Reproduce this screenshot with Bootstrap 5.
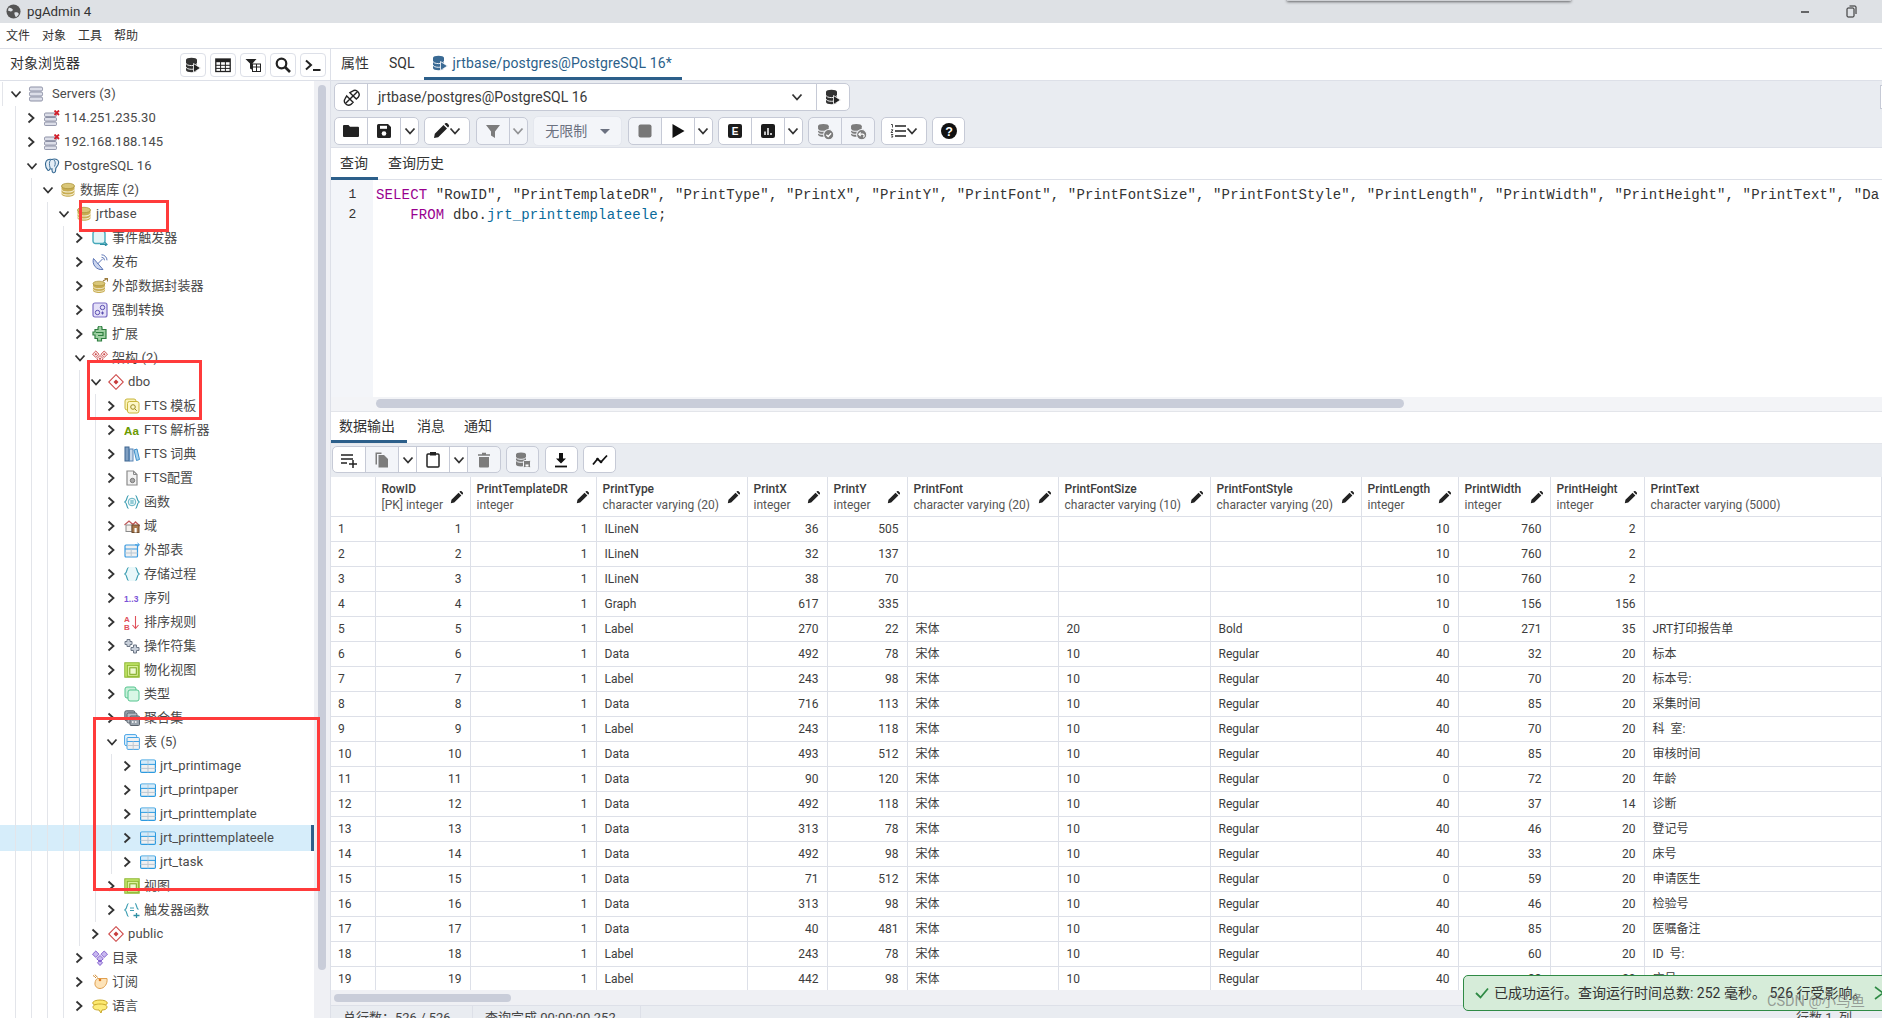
<!doctype html>
<html lang="zh">
<head>
<meta charset="utf-8">
<title>pgAdmin 4</title>
<link rel="stylesheet" href="https://cdn.jsdelivr.net/npm/bootstrap@5.3.0/dist/css/bootstrap.min.css">
<style>
html,body{height:100%;overflow:hidden}
body{font-family:Roboto,"Noto Sans CJK SC",sans-serif;font-size:13px;color:#3c3c3c;background:#fff}
.app{position:relative;height:1018px;width:1882px;overflow:hidden}
.titlebar{height:23px;background:#dee1e5;position:relative;font-size:13.300px;color:#333}
.titlebar .tshadow{position:absolute;left:1287px;top:-3px;width:284px;height:4px;background:#cfd1d5;box-shadow:0 1px 3px rgba(0,0,0,.55)}
.tlogo{width:15px;height:15px;margin:0 6px 0 6px}
.winbtns{margin-left:auto;gap:35px;padding-right:25px}
.menubar{height:26px;border-bottom:1px solid #dde0e8;font-size:12px;gap:12px;padding-left:6px;color:#333}
.mainarea{height:969px}
.sidepane{width:331px;flex:none;border-right:1px solid #dde0e8}
.sidehead{height:32px;border-bottom:1px solid #dde0e8;padding:0 4px 0 10px}
.sidehead .ttl{font-size:14px;color:#333;margin-right:auto;margin-top:-3px}
.sidehead .stools{gap:4px}
.sbtn{width:26px;height:24px;padding:0;border:1px solid #dde0e8;border-radius:4px;background:#fff;display:inline-flex;align-items:center;justify-content:center}
.treewrap{height:937px;overflow:hidden}
.treelist{width:314px;flex:none;overflow:hidden;padding-top:1px}
.trow{height:24px;display:flex;align-items:center;white-space:nowrap;color:#4a4a4a;letter-spacing:.08px}
.trow.root{background:linear-gradient(#e3e5ea,#e3e5ea) 2px 0/1px 100% no-repeat}
.trow.sel{height:26px;margin:-1px 0;background:#d6edfa;border-right:3px solid #2c5f8a}
.gd{flex:none;align-self:stretch;background:repeating-linear-gradient(90deg,transparent 0 15px,#e3e5ea 15px 16px)}
.d1{width:16px}.d2{width:32px}.d3{width:48px}.d4{width:64px}.d5{width:80px}.d6{width:96px}.d7{width:112px}
.cv{flex:none;width:28px;padding-left:10px;display:flex;align-items:center}
.ic{width:16px;height:16px;flex:none;margin-right:4px}
.vtrack{width:16px;background:#eff0f4;padding:4px 0 0 4px}
.vthumb{width:8px;height:885px;background:#c9cdd9;border-radius:4px}
.contentpane{width:1551px;flex:none;overflow:hidden}
.toptabs{height:31px}
.ptab{height:31px;padding:0 10px;color:#333;font-size:14px;display:flex;align-items:center;border-bottom:3px solid transparent;margin:0;line-height:1;white-space:nowrap}
.toptabs .ptab{padding-bottom:1px}
.ptab.on{border-bottom-color:#2c5f8a}
.toptabs .ptab.on{color:#2c5f8a;width:258px;padding-left:8px;letter-spacing:.13px}
.barzone{height:68px;background:#e9ecf1;border-top:1px solid #dde0e8;border-bottom:1px solid #dde0e8;padding:2px 0 0 3px;position:relative}
.sliver{position:absolute;right:0;top:4px;width:2px;height:24px;background:#fff;border:1px solid #c6cad6;border-right:0}
.bar1{height:28px;margin-bottom:6px}
.bar2{gap:5.400px;height:28px}
.tbtn{--bs-btn-padding-x:0;--bs-btn-padding-y:0;--bs-btn-border-radius:5px;width:34px;height:28px;background:#fff;border:1px solid #c6cad6;display:inline-flex;align-items:center;justify-content:center}
.btn-group>.tbtn{flex:none}
.tbtn:hover{background:#fff;border-color:#c6cad6}
.tbtn.nar{width:19px}
.tbtn.off{background:#f3f5f9}
.tbtn.wid{width:46px}
.tbtn.solo{width:33px}
.btn-group>.tbtn.consel{width:450px;justify-content:space-between;padding:0 13px 0 10px;font-size:14px;color:#3a3a3a}
.limitbtn{width:89px;height:30px;margin-top:-1px;background:#f3f5f9;border:1px solid #e4e7ee;border-radius:5px;color:#6b7180;font-size:14px;display:inline-flex;align-items:center;justify-content:center;gap:13px;padding:0}
.caret2{width:0;height:0;border-left:5px solid transparent;border-right:5px solid transparent;border-top:5px solid #6b7180}
.qtabs{height:32px;border-bottom:1px solid #dde0e8}
.qtabs .ptab{height:32px;padding:0 0 0 9px;width:47px;margin-right:0}
.qtabs .ptab.later{width:auto;padding-left:10px}
.codezone{height:217px;overflow:hidden}
.gutter{width:42px;flex:none;background:#f3f5f9;padding-top:5px;font-family:"Liberation Mono",monospace;font-size:13px;line-height:20px;text-align:center;color:#333;padding-left:1px}
.codebox{padding:5px 0 0 3px;font-family:"Liberation Mono",monospace;font-size:14px;letter-spacing:.14px;line-height:20px;white-space:pre;overflow:hidden;color:#333;margin:0;flex:1}
.kw{color:#990090}.tn{color:#0a6a9a}
.hbar1{height:15px;background:#f3f4f7;padding:2px 0 0 45px;border-bottom:1px solid #e3e5ea}
.hthumb1{width:1028px;height:9px;background:#c9cdd9;border-radius:5px}
.rtabs{height:31px}
.rtabs .ptab{font-size:14px;height:31px}
.rtabs .ptab.on{width:76px;padding:0 0 0 8px}
.rtabs .ptab.later{padding:0 9px 0 10px}
.rbar{height:34px;background:#e9ecf1;padding:2px 0 0 1px;gap:5.400px;border-top:1px solid #e3e5ea}
.rbar .tbtn{height:27px}
.grbox{height:513px;overflow:hidden}
.dgrid{table-layout:fixed;width:1551px;margin:0;border-collapse:collapse;font-size:12px;color:#3c3c3c;--bs-table-border-color:#dde0e8}
.c0{width:44px}.c1{width:95px}.c2{width:126px}.c3{width:151px}.c4{width:80px}.c5{width:80px}.c6{width:151px}.c7{width:152px}.c8{width:151px}.c9{width:97px}.c10{width:92px}.c11{width:94px}
.dgrid th,.dgrid td{border:1px solid #dde0e8;border-top:0;padding:0 8px;height:25px;line-height:14px;white-space:nowrap;overflow:hidden;box-shadow:none;vertical-align:middle;color:#3c3c3c}
.dgrid thead th{height:39px;font-weight:500;padding:2px 6px 0;position:relative;line-height:16px;vertical-align:middle}
.dgrid thead th small{display:block;font-size:12px;font-weight:400;color:#555}
.dgrid thead th:first-child{border-left:0}
.dgrid td:first-child{border-left:0;padding-left:7px;box-shadow:2px 0 2px -1px rgba(0,0,0,.09)}
.dgrid td:nth-child(2),.dgrid td:nth-child(3),.dgrid td:nth-child(5),.dgrid td:nth-child(6),.dgrid td:nth-child(10),.dgrid td:nth-child(11),.dgrid td:nth-child(12){text-align:right}
.pen{position:absolute;right:7px;top:14px;width:13px;height:13px}
.hbar2{height:16px;background:#eff0f4;padding:4px 0 0 3px;border-bottom:1px solid #dde0e8}
.hthumb2{width:177px;height:8px;background:#c9cdd9;border-radius:4px}
.statusbar{height:24px;background:#e9ecf1;font-size:13px;color:#444}
.statusbar .seg{padding:0 12px;border-right:1px solid #dde0e8;height:100%;display:flex;align-items:center}
.seg1{width:142px}.seg2{width:168px}
.statusbar .endseg{margin-left:auto;padding-right:30px;white-space:nowrap}
.anno{position:absolute;border:3px solid #ff3b3b;pointer-events:none}
.an1{left:79px;top:200px;width:90px;height:32px}
.an2{left:87px;top:360px;width:115px;height:60px}
.an3{left:93px;top:717px;width:227px;height:174px}
.okmsg{position:absolute;left:1463px;top:975px;width:430px;height:36px;background:#d6ecd9;border:1px solid #2f8a45;border-radius:5px;font-size:14px;color:#333;padding-left:10px;white-space:nowrap;gap:4px}
.okclose{position:absolute;left:409px;top:10px}
.wmark{position:absolute;left:1767px;top:991px;font-size:14.500px;color:rgba(110,110,110,.65);white-space:nowrap}
</style>
</head>
<body>
<svg width="0" height="0" class="position-absolute">
<defs>
<symbol id="chR" viewBox="0 0 10 12"><path d="M2.500 1.500 7.500 6l-5 4.500" fill="none" stroke="#333" stroke-width="1.800"/></symbol>
<symbol id="chD" viewBox="0 0 12 10"><path d="M1.500 2.500 6 7.500l4.500-5" fill="none" stroke="#333" stroke-width="1.800"/></symbol>
<symbol id="srv" viewBox="0 0 16 16"><g fill="#dcdee8" stroke="#8d91a6"><rect x="1.500" y="1" width="13" height="4" rx="1.300"/><rect x="1.500" y="6" width="13" height="4" rx="1.300"/><rect x="1.500" y="11" width="13" height="4" rx="1.300"/></g></symbol>
<symbol id="srvx" viewBox="0 0 16 16"><g fill="#dcdee8" stroke="#8d91a6"><rect x=".5" y="3" width="12" height="3.600" rx="1.200"/><rect x=".5" y="7.500" width="12" height="3.600" rx="1.200"/><rect x=".5" y="12" width="12" height="3.600" rx="1.200"/></g><path d="M10.500.5l4.500 4.500M15 .5 10.500 5" stroke="#d21f2b" stroke-width="1.800"/></symbol>
<symbol id="pg" viewBox="0 0 16 16"><path d="M8 1.500C5 .8 2 2 1.600 5c-.3 2.500.8 6 2.200 7.200 1 .8 1.700-.4 2.400-1.600.6.400 1.200.4 1.800.3-.1 1.200-.1 3 1 3.600 1.300.6 2.500-.4 2.600-2 .1-1 .1-2 .4-2.700 1.400-1.400 2.900-3.800 2.600-6C14.300 1.500 10.500.3 8 1.500z" fill="#e3edf6" stroke="#336791" stroke-width="1.100"/><path d="M6.500 2c-1.500 2-1.300 5-.3 8M10 2c1.500 1.500 1.600 4 .5 6.500" fill="none" stroke="#336791" stroke-width=".9"/></symbol>
<symbol id="db" viewBox="0 0 16 16"><path d="M1.500 4v8c0 1.500 2.900 2.800 6.500 2.800s6.500-1.300 6.500-2.800V4z" fill="#c8ad52"/><ellipse cx="8" cy="4" rx="6.500" ry="2.700" fill="#d9c678" stroke="#a88f35" stroke-width=".7"/><path d="M1.500 7.200c0 1.500 2.900 2.800 6.500 2.800s6.500-1.300 6.500-2.800M1.500 10.200c0 1.500 2.900 2.800 6.500 2.800s6.500-1.300 6.500-2.800" fill="none" stroke="#f4edd0" stroke-width="1.100"/></symbol>
<symbol id="evt" viewBox="0 0 16 16"><rect x="1" y="1" width="12" height="12.500" rx="2.500" fill="#e4f5f7" stroke="#46a9ba" stroke-width="1.400"/><path d="M8 14.500h6.500M13 12.500l2 2-2 1.500" fill="none" stroke="#2f8fa3" stroke-width="1.200"/></symbol>
<symbol id="pub" viewBox="0 0 16 16"><path d="M1.500 4.500a8.500 8.500 0 0 0 9.500 11z" fill="#cdd7ef" stroke="#5a74b5"/><path d="M5.500 10 10.500 5M9.500.8a5.500 5.500 0 0 1 5.500 5.500M9.500 3.300a3 3 0 0 1 3 3" fill="none" stroke="#5a74b5"/></symbol>
<symbol id="fdw" viewBox="0 0 16 16"><path d="M1 5.500v7c0 1.300 2.700 2.500 6 2.500s6-1.200 6-2.500v-7z" fill="#c8ad52"/><ellipse cx="7" cy="5.500" rx="6" ry="2.300" fill="#d9c678" stroke="#a88f35" stroke-width=".7"/><path d="M1 8.300c0 1.300 2.700 2.400 6 2.400s6-1.100 6-2.400M1 11c0 1.300 2.700 2.400 6 2.400s6-1.100 6-2.400" fill="none" stroke="#f4edd0"/><path d="M11 3 15 .8M12.500.5H15.500V3.500" fill="none" stroke="#9a7a3c" stroke-width="1.100"/></symbol>
<symbol id="cast" viewBox="0 0 16 16"><rect x="1" y="1" width="14" height="14" rx="2" fill="#e4e0f8" stroke="#7b6cc4" stroke-width="1.200"/><circle cx="5.500" cy="10.500" r="2.200" fill="none" stroke="#5b4fb0"/><circle cx="10.500" cy="5.500" r="2.200" fill="none" stroke="#5b4fb0"/><path d="M9 11h3M10.500 9.500v3" stroke="#5b4fb0"/></symbol>
<symbol id="ext" viewBox="0 0 16 16"><path d="M3 3.500h3V2a2 2 0 0 1 4 0v1.500h4v9H9.500V15h-4v-2.500H3V9H1V6h2z" fill="#9fd0a3" stroke="#2f7f40" stroke-width="1.200"/><path d="M4 6.500h7v3H6" fill="none" stroke="#2f7f40" stroke-width="1.200"/></symbol>
<symbol id="schs" viewBox="0 0 16 16"><g fill="#fbe9e9" stroke="#c94a4a" stroke-width=".9"><path d="M3.800 1 7 4.200 3.800 7.500.5 4.200zM12.200 1l3.300 3.200-3.300 3.300L9 4.200zM8 5.500l3.300 3.200L8 12 4.700 8.700z"/></g><g fill="#c94a4a"><circle cx="3.800" cy="4.200" r="1"/><circle cx="12.200" cy="4.200" r="1"/><circle cx="8" cy="8.700" r="1"/></g></symbol>
<symbol id="sch" viewBox="0 0 16 16"><path d="M8 .7 15.300 8 8 15.300.7 8z" fill="#fff" stroke="#cf4b4b" stroke-width="1.100"/><path d="M8 5.500 10.500 8 8 10.500 5.500 8z" fill="#c83c3c"/></symbol>
<symbol id="ftpl" viewBox="0 0 16 16"><rect x="1" y="1" width="11" height="11" rx="2" fill="#fbf3b8" stroke="#c8b63c"/><rect x="3.500" y="3.500" width="11.500" height="11.500" rx="2" fill="#fdf7c8" stroke="#c8b63c"/><circle cx="9" cy="9" r="2.300" fill="none" stroke="#9a8a20"/><path d="m10.800 10.800 2 2" stroke="#9a8a20"/></symbol>
<symbol id="aa" viewBox="0 0 16 16"><text x="0" y="12.500" font-family="Liberation Sans" font-size="11.500" font-weight="700" fill="#6a9a00">Aa</text></symbol>
<symbol id="dict" viewBox="0 0 16 16"><rect x="1" y="1" width="4" height="14" fill="#7f9fc2" stroke="#3c6490"/><rect x="5.500" y="3" width="3.500" height="12" fill="#c7d8ea" stroke="#5b86b4"/><path d="m10 4 3-1 2.500 10.500-3 1z" fill="#a8d4ef" stroke="#3e8fc9"/></symbol>
<symbol id="cfgd" viewBox="0 0 16 16"><path d="M3 1h6.500L13 4.500V15H3z" fill="#f2f2f2" stroke="#8a8a8a" stroke-width="1.200"/><path d="M9.500 1v3.500H13" fill="none" stroke="#8a8a8a"/><circle cx="8.500" cy="10.500" r="2.200" fill="#aaa" stroke="#777"/></symbol>
<symbol id="fn" viewBox="0 0 16 16"><path d="M4.500 1.500C2.500 1.800 3.500 7 .8 8c2.700 1 1.700 6.200 3.700 6.500M11.500 1.500c2 .3 1 5.500 3.700 6.500-2.700 1-1.700 6.200-3.700 6.500" fill="none" stroke="#3f9fb3" stroke-width="1.200"/><circle cx="8" cy="8" r="3.800" fill="#e7f6f8" stroke="#3f9fb3" stroke-width=".8"/><path d="M6.300 7h3.400M6.300 9h3.400" stroke="#3f9fb3"/></symbol>
<symbol id="dom" viewBox="0 0 16 16"><path d="M.5 7 5 3l4 3.500L11.500 4 16 8" fill="none" stroke="#c05a5a" stroke-width="1.300"/><rect x="2" y="7" width="6" height="6.500" fill="#f4f0ec" stroke="#8a8a8a"/><rect x="8" y="7" width="7" height="7.500" fill="#a9794e" stroke="#6f4d2e"/><rect x="10.500" y="10" width="2.200" height="4.500" fill="#fff"/></symbol>
<symbol id="ftb" viewBox="0 0 16 16"><rect x="1" y="3" width="12.500" height="12" rx="1" fill="#f0f0f0" stroke="#3a9ae0" stroke-width="1.200"/><path d="M1 7h12.500" stroke="#3a9ae0"/><path d="M7.200 7v8M1 11h12.500" stroke="#b9c7d3"/><path d="M11 2.800h4M13.500 1 15.500 2.800 13.500 4.600" fill="none" stroke="#3a9ae0"/></symbol>
<symbol id="prc" viewBox="0 0 16 16"><path d="M5 1C2.500 2 2 5.500 2 8s.5 6 3 7h6c2.500-1 3-4.500 3-7s-.5-6-3-7z" fill="#eaf8fa"/><path d="M4.500 1.500C2.500 1.800 3.500 7 .8 8c2.700 1 1.700 6.200 3.700 6.500M11.500 1.500c2 .3 1 5.500 3.700 6.500-2.700 1-1.700 6.200-3.700 6.500" fill="none" stroke="#3f9fb3" stroke-width="1.200"/></symbol>
<symbol id="seq" viewBox="0 0 16 16"><text x="0" y="11.500" font-family="Liberation Sans" font-size="8.500" font-weight="700" fill="#7b52d6">1..3</text></symbol>
<symbol id="coll" viewBox="0 0 16 16"><text x="0" y="7.500" font-family="Liberation Sans" font-size="8" font-weight="700" fill="#e0505a">A</text><text x="0" y="15.500" font-family="Liberation Sans" font-size="8" font-weight="700" fill="#e0505a">B</text><path d="M11.500 2v12M8.500 11l3 3.500 3-3.500" fill="none" stroke="#e0505a" stroke-width="1.100"/></symbol>
<symbol id="ops" viewBox="0 0 16 16"><g fill="#c9d0da" stroke="#6d7786"><path d="M1 3.500h2v-2h3v2h2v3H6v2H3v-2H1z"/><path d="M7 9.500h2.500v-2.500h3v2.500H15v3h-2.500V15h-3v-2.500H7z"/></g></symbol>
<symbol id="mv" viewBox="0 0 16 16"><rect x=".8" y=".8" width="14.400" height="14.400" fill="#c6e86e" stroke="#8ab52c"/><rect x="3.300" y="3.300" width="11" height="11" fill="#dcf29e" stroke="#8ab52c"/><rect x="5.800" y="5.800" width="6.500" height="6.500" fill="#eef9cf" stroke="#7aa520"/></symbol>
<symbol id="typ" viewBox="0 0 16 16"><rect x="1" y="1" width="11" height="11" rx="2" fill="#c7f0d9" stroke="#55c48f"/><rect x="4" y="4" width="11" height="11" rx="2" fill="#d9f7e6" stroke="#55c48f"/></symbol>
<symbol id="agg" viewBox="0 0 16 16"><rect x=".8" y=".8" width="10" height="10" rx="1.500" fill="#9aa3ad" stroke="#59626c"/><rect x="3" y="3" width="10" height="10" rx="1.500" fill="#b5bcc4" stroke="#59626c"/><rect x="6" y="6" width="9.500" height="9.500" rx="1" fill="#98a2ac" stroke="#59626c"/><path d="M8 9h1.500M11 9h1.500M8 12h1.500M11 12h1.500" stroke="#fff" stroke-width="1.400"/></symbol>
<symbol id="tbs" viewBox="0 0 16 16"><rect x=".6" y=".6" width="12" height="11" rx="1.500" fill="#e7f3fc" stroke="#45a3e6"/><rect x="3" y="3.500" width="12.400" height="11.900" rx="1" fill="#f1f1f1" stroke="#45a3e6"/><path d="M3 7.500h12.400" stroke="#45a3e6"/><path d="M9.200 7.500v8M3 11.500h12.400" stroke="#c2c8cf"/></symbol>
<symbol id="tb" viewBox="0 0 16 16"><rect x=".6" y="2" width="14.800" height="12.400" rx="1.200" fill="#f0f0f0" stroke="#2d9be0" stroke-width="1.200"/><rect x="1.200" y="2.600" width="13.600" height="3.600" fill="#d4ebfa"/><path d="M.6 6.400h14.800" stroke="#2d9be0"/><path d="M8 6.400v8M.6 10.400h14.800M8 2v4" stroke="#b9c7d3"/></symbol>
<symbol id="tfn" viewBox="0 0 16 16"><path d="M4.500 1.500C2.500 1.800 3.500 7 .8 8c2.700 1 1.700 6.200 3.700 6.500M11 1.500c2 .3 1 5 3.500 6" fill="none" stroke="#3f9fb3" stroke-width="1.200"/><path d="M6 6h4M6 8.500h4" stroke="#3f9fb3"/><path d="M9.500 13.500h6M12.500 11v5" stroke="#2f8fa3" stroke-width="1.300"/></symbol>
<symbol id="cat" viewBox="0 0 16 16"><g fill="#c8b8f0" stroke="#7a55c8" stroke-width=".9"><path d="M3.800 1 7 4.200 3.800 7.500.5 4.200zM12.200 1l3.300 3.200-3.300 3.300L9 4.200zM8 5.500l3.300 3.200L8 12 4.700 8.700zM8 10l2.500 2.800L8 15.500l-2.500-2.700z"/></g></symbol>
<symbol id="subs" viewBox="0 0 16 16"><path d="M5.500 4.500h9.500c.8 5-2.500 10-7 10-3 0-5.500-2.500-5-5.500.2-2 1-3.800 2.500-4.500z" fill="#fde3b8" stroke="#e0a050"/><path d="M1 1.500c1 .5 2 1.300 3 2.500M2.800.8C4 1.500 5 2.500 5.500 3.500" fill="none" stroke="#d08a30"/><circle cx="8" cy="6" r="1.300" fill="#e07a20"/></symbol>
<symbol id="lang" viewBox="0 0 16 16"><ellipse cx="8" cy="5" rx="7.300" ry="3" fill="#fde96e" stroke="#c9a82a"/><path d="M1 9c0-2 3-3 7-3s7 1 7 3-2 3-5 3l-1 3-2-3C3 12 1 11 1 9z" fill="#fdec7a" stroke="#c9a82a"/></symbol>

<symbol id="dbplay" viewBox="0 0 16 16"><path d="M1 3v10c0 1.300 2.500 2.300 5.500 2.300S12 14.300 12 13V3z" fill="#333"/><ellipse cx="6.500" cy="3" rx="5.500" ry="2.300" fill="#333"/><path d="M1 6.300c0 1.300 2.500 2.300 5.500 2.300S12 7.600 12 6.300M1 10c0 1.300 2.500 2.300 5.500 2.300S12 11.300 12 10" fill="none" stroke="#fff" stroke-width=".9"/><path d="M8.500 6.500 15.500 11 8.500 15.500z" fill="#222" stroke="#fff" stroke-width=".8"/></symbol>
<symbol id="gridi" viewBox="0 0 16 16"><rect x=".8" y="2" width="14.400" height="12.500" fill="#fff" stroke="#222" stroke-width="1.300"/><rect x="1" y="2" width="14" height="3.200" fill="#222"/><path d="M.8 8.300h14.400M.8 11.400h14.400M5.600 5v9.500M10.400 5v9.500" stroke="#222"/></symbol>
<symbol id="ftbl" viewBox="0 0 16 16"><path d="M.5 2h11L7.500 6.500V13L5 11.500V6.500z" fill="#222"/><rect x="7.500" y="7" width="8" height="7.500" fill="#fff" stroke="#222"/><path d="M7.500 10h8M11.500 7v7.500" stroke="#222"/></symbol>
<symbol id="srch" viewBox="0 0 16 16"><circle cx="6.500" cy="6.500" r="4.800" fill="none" stroke="#222" stroke-width="2.200"/><path d="m10 10 5 5" stroke="#222" stroke-width="2.600"/></symbol>
<symbol id="term" viewBox="0 0 16 16"><path d="m1 3.500 5 4.500-5 4.500" fill="none" stroke="#222" stroke-width="2"/><path d="M8 13h7.500" stroke="#222" stroke-width="2"/></symbol>
<symbol id="globe" viewBox="0 0 16 16"><circle cx="8" cy="8" r="7.500" fill="#555"/><path d="M3 4c2-.5 3 .5 4 1.500S6 8 5 8 3 7 2 7zM9 9c2-.5 4 0 4.500 1s-1.500 3.500-3 4c-.5-1.500-2-3-1.500-5z" fill="#dfe2e6"/></symbol>
<symbol id="conn" viewBox="0 0 16 16"><path d="m2.500 13.500 11-11" stroke="#222" stroke-width="1.300"/><path d="M3.500 6.500 9.500 12.500 7.500 14.500c-1.500 1-3.500 1-5 -.5s-1.500-3.500-.5-5zM6.500 3.500 12.500 9.500 14.500 7.500c1-1.500 1-3.500-.5-5s-3.500-1.500-5-.5z" fill="none" stroke="#222" stroke-width="1.300"/></symbol>
<symbol id="fold" viewBox="0 0 16 16"><path d="M0 3a1 1 0 0 1 1-1h4.500L7 3.800h8a1 1 0 0 1 1 1V13a1 1 0 0 1-1 1H1a1 1 0 0 1-1-1z" fill="#222"/></symbol>
<symbol id="save" viewBox="0 0 16 16"><path d="M2.500 1H12l3 3v9.500a1.500 1.500 0 0 1-1.500 1.500h-11A1.500 1.500 0 0 1 1 13.500v-11A1.500 1.500 0 0 1 2.500 1z" fill="#222"/><rect x="4" y="2.800" width="7" height="3" fill="#fff"/><circle cx="8" cy="10.500" r="2.300" fill="#fff"/></symbol>
<symbol id="pencil" viewBox="0 0 16 16"><path d="M1 15l.8-4.200L10.500 2l3.500 3.500-8.800 8.700zM11.500 1l3.500 3.500 .5-.5a1.800 1.800 0 0 0-.1-2.600l-.8-.8a1.800 1.800 0 0 0-2.600 0z" fill="#222"/></symbol>
<symbol id="funnel" viewBox="0 0 16 16"><path d="M1 2h14l-5 6.500V15l-4-2.500v-4z" fill="#7c7c7c"/></symbol>
<symbol id="stopi" viewBox="0 0 16 16"><rect x="1.500" y="1.500" width="13" height="13" rx="2" fill="#777"/></symbol>
<symbol id="playi" viewBox="0 0 16 16"><path d="M2.500 1 14.500 8l-12 7z" fill="#111"/></symbol>
<symbol id="ebox" viewBox="0 0 16 16"><rect x="1" y="1" width="14" height="14" rx="2" fill="#1c1c1c"/><text x="8" y="12" text-anchor="middle" font-family="Liberation Sans" font-size="10" font-weight="700" fill="#fff">E</text></symbol>
<symbol id="cbox" viewBox="0 0 16 16"><rect x="1" y="1" width="14" height="14" rx="2" fill="#1c1c1c"/><path d="M5 12V8.500M8 12V5M11 12v-2" stroke="#fff" stroke-width="1.500"/></symbol>
<symbol id="dbchk" viewBox="0 0 16 16"><path d="M1 3v8c0 1.200 2.300 2 5 2s5-.8 5-2V3z" fill="#7c7c7c"/><ellipse cx="6" cy="3" rx="5" ry="2" fill="#7c7c7c"/><path d="M1 5.800c0 1.200 2.300 2 5 2s5-.8 5-2M1 8.600c0 1.200 2.300 2 5 2" fill="none" stroke="#f3f5f9"/><circle cx="11" cy="11" r="4.800" fill="#7c7c7c" stroke="#f3f5f9"/><path d="m8.800 11 1.700 1.700 2.800-3" fill="none" stroke="#fff" stroke-width="1.200"/></symbol>
<symbol id="dbund" viewBox="0 0 16 16"><path d="M1 3v8c0 1.200 2.300 2 5 2s5-.8 5-2V3z" fill="#7c7c7c"/><ellipse cx="6" cy="3" rx="5" ry="2" fill="#7c7c7c"/><path d="M1 5.800c0 1.200 2.300 2 5 2s5-.8 5-2M1 8.600c0 1.200 2.300 2 5 2" fill="none" stroke="#f3f5f9"/><circle cx="11" cy="11" r="4.800" fill="#7c7c7c" stroke="#f3f5f9"/><path d="M8.500 10.500h3.500c1.500 0 1.800 2.300.5 2.800M10 8.800l-1.700 1.700 1.700 1.700" fill="none" stroke="#fff" stroke-width="1.100"/></symbol>
<symbol id="listi" viewBox="0 0 16 16"><path d="M5 3h11M5 8h11M5 13h11" stroke="#222" stroke-width="1.400"/><path d="M1 1.500h1.500v3M1 6.800h2L1 9.500h2M1 11.500h2l-1 1 1 1.500H1" fill="none" stroke="#222" stroke-width=".8"/></symbol>
<symbol id="help" viewBox="0 0 16 16"><circle cx="8" cy="8" r="8" fill="#111"/><text x="8" y="12.500" text-anchor="middle" font-family="Liberation Sans" font-size="12.500" font-weight="700" fill="#fff">?</text></symbol>
<symbol id="addrow" viewBox="0 0 16 16"><path d="M0 3h12M0 7h12M0 11h6M8 12h8M12 8v8" stroke="#222" stroke-width="1.500"/></symbol>
<symbol id="copyi" viewBox="0 0 16 16"><path d="M1.500 1h6v1.500H3V13H1.500z" fill="#7c7c7c"/><path d="M4.500 3.500H10l4 4V16H4.500z" fill="#7c7c7c"/></symbol>
<symbol id="paste" viewBox="0 0 16 16"><rect x="2" y="2.500" width="12" height="13" rx="1" fill="#fff" stroke="#222" stroke-width="1.500"/><rect x="5" y="0.500" width="6" height="3.500" fill="#222"/></symbol>
<symbol id="trash" viewBox="0 0 16 16"><path d="M3 5h10v9.500a1 1 0 0 1-1 1H4a1 1 0 0 1-1-1z" fill="#7c7c7c"/><path d="M2 3h12M6 1.500h4" stroke="#7c7c7c" stroke-width="1.500"/></symbol>
<symbol id="dbsave" viewBox="0 0 16 16"><path d="M1 3v10c0 1.200 2.300 2 5 2s5-.8 5-2V3z" fill="#7c7c7c"/><ellipse cx="6" cy="3" rx="5" ry="2" fill="#7c7c7c"/><path d="M1 5.800c0 1.200 2.300 2 5 2s5-.8 5-2M1 8.800c0 1.200 2.300 2 5 2s5-.8 5-2" fill="none" stroke="#f3f5f9"/><rect x="8.500" y="9" width="7" height="7" rx="1" fill="#7c7c7c" stroke="#f3f5f9"/><rect x="10.500" y="13" width="3" height="2" fill="#fff"/></symbol>
<symbol id="dl" viewBox="0 0 16 16"><path d="M6 1h4v5.500h3L8 11.500 3 6.500h3z" fill="#111"/><path d="M2 14.500h12" stroke="#111" stroke-width="1.800"/></symbol>
<symbol id="graph" viewBox="0 0 16 16"><path d="M1 12.500 5.500 7 9 10l6-6.500" fill="none" stroke="#111" stroke-width="1.800"/><circle cx="5.500" cy="7" r="1.300" fill="#111"/><circle cx="9" cy="10" r="1.300" fill="#111"/></symbol>
<symbol id="dbt" viewBox="0 0 16 16"><path d="M1 3v10c0 1.300 2.500 2.300 5.500 2.300S12 14.300 12 13V3z" fill="#3a6a94"/><ellipse cx="6.500" cy="3" rx="5.500" ry="2.300" fill="#3a6a94"/><path d="M1 6.300c0 1.300 2.500 2.300 5.500 2.300S12 7.600 12 6.300M1 10c0 1.300 2.500 2.300 5.500 2.300S12 11.300 12 10" fill="none" stroke="#fff" stroke-width=".9"/><path d="M8.500 6.500 15.500 11 8.500 15.500z" fill="#3a6a94" stroke="#fff" stroke-width=".8"/></symbol>
</defs>
</svg>

<div class="app d-flex flex-column">
  <div class="titlebar d-flex align-items-center flex-none">
    <svg class="tlogo"><use href="#globe"/></svg><span>pgAdmin 4</span>
    <div class="tshadow"></div>
    <div class="winbtns d-flex align-items-center">
      <svg width="11" height="11" viewBox="0 0 11 11"><path d="M1 6h8" stroke="#222" stroke-width="1.300"/></svg>
      <svg width="11" height="13" viewBox="0 0 11 13"><rect x="1" y="3" width="7" height="9" rx="1" fill="none" stroke="#222"/><path d="M3.500 1h5.500a1 1 0 0 1 1 1v7" fill="none" stroke="#222"/></svg>
    </div>
  </div>
  <div class="menubar d-flex align-items-center">
    <span>文件</span><span>对象</span><span>工具</span><span>帮助</span>
  </div>
  <div class="mainarea d-flex">
    <aside class="sidepane">
      <div class="sidehead d-flex align-items-center">
        <span class="ttl">对象浏览器</span>
        <div class="stools d-flex">
          <button class="sbtn"><svg width="16" height="16"><use href="#dbplay"/></svg></button>
          <button class="sbtn"><svg width="16" height="16"><use href="#gridi"/></svg></button>
          <button class="sbtn"><svg width="16" height="16"><use href="#ftbl"/></svg></button>
          <button class="sbtn"><svg width="16" height="16"><use href="#srch"/></svg></button>
          <button class="sbtn"><svg width="18" height="16"><use href="#term"/></svg></button>
        </div>
      </div>
      <div class="treewrap d-flex">
        <div class="treelist">
          <div class="trow root"><span class="cv"><svg width="12" height="10"><use href="#chD"/></svg></span><svg class="ic"><use href="#srv"/></svg><span class="ms-1">Servers (3)</span></div>
          <div class="trow"><span class="gd d1"></span><span class="cv"><svg width="10" height="12"><use href="#chR"/></svg></span><svg class="ic"><use href="#srvx"/></svg><span>114.251.235.30</span></div>
          <div class="trow"><span class="gd d1"></span><span class="cv"><svg width="10" height="12"><use href="#chR"/></svg></span><svg class="ic"><use href="#srvx"/></svg><span>192.168.188.145</span></div>
          <div class="trow"><span class="gd d1"></span><span class="cv"><svg width="12" height="10"><use href="#chD"/></svg></span><svg class="ic"><use href="#pg"/></svg><span>PostgreSQL 16</span></div>
          <div class="trow"><span class="gd d2"></span><span class="cv"><svg width="12" height="10"><use href="#chD"/></svg></span><svg class="ic"><use href="#db"/></svg><span>数据库 (2)</span></div>
          <div class="trow"><span class="gd d3"></span><span class="cv"><svg width="12" height="10"><use href="#chD"/></svg></span><svg class="ic"><use href="#db"/></svg><span>jrtbase</span></div>
          <div class="trow"><span class="gd d4"></span><span class="cv"><svg width="10" height="12"><use href="#chR"/></svg></span><svg class="ic"><use href="#evt"/></svg><span>事件触发器</span></div>
          <div class="trow"><span class="gd d4"></span><span class="cv"><svg width="10" height="12"><use href="#chR"/></svg></span><svg class="ic"><use href="#pub"/></svg><span>发布</span></div>
          <div class="trow"><span class="gd d4"></span><span class="cv"><svg width="10" height="12"><use href="#chR"/></svg></span><svg class="ic"><use href="#fdw"/></svg><span>外部数据封装器</span></div>
          <div class="trow"><span class="gd d4"></span><span class="cv"><svg width="10" height="12"><use href="#chR"/></svg></span><svg class="ic"><use href="#cast"/></svg><span>强制转换</span></div>
          <div class="trow"><span class="gd d4"></span><span class="cv"><svg width="10" height="12"><use href="#chR"/></svg></span><svg class="ic"><use href="#ext"/></svg><span>扩展</span></div>
          <div class="trow"><span class="gd d4"></span><span class="cv"><svg width="12" height="10"><use href="#chD"/></svg></span><svg class="ic"><use href="#schs"/></svg><span>架构 (2)</span></div>
          <div class="trow"><span class="gd d5"></span><span class="cv"><svg width="12" height="10"><use href="#chD"/></svg></span><svg class="ic"><use href="#sch"/></svg><span>dbo</span></div>
          <div class="trow"><span class="gd d6"></span><span class="cv"><svg width="10" height="12"><use href="#chR"/></svg></span><svg class="ic"><use href="#ftpl"/></svg><span>FTS 模板</span></div>
          <div class="trow"><span class="gd d6"></span><span class="cv"><svg width="10" height="12"><use href="#chR"/></svg></span><svg class="ic"><use href="#aa"/></svg><span>FTS 解析器</span></div>
          <div class="trow"><span class="gd d6"></span><span class="cv"><svg width="10" height="12"><use href="#chR"/></svg></span><svg class="ic"><use href="#dict"/></svg><span>FTS 词典</span></div>
          <div class="trow"><span class="gd d6"></span><span class="cv"><svg width="10" height="12"><use href="#chR"/></svg></span><svg class="ic"><use href="#cfgd"/></svg><span>FTS配置</span></div>
          <div class="trow"><span class="gd d6"></span><span class="cv"><svg width="10" height="12"><use href="#chR"/></svg></span><svg class="ic"><use href="#fn"/></svg><span>函数</span></div>
          <div class="trow"><span class="gd d6"></span><span class="cv"><svg width="10" height="12"><use href="#chR"/></svg></span><svg class="ic"><use href="#dom"/></svg><span>域</span></div>
          <div class="trow"><span class="gd d6"></span><span class="cv"><svg width="10" height="12"><use href="#chR"/></svg></span><svg class="ic"><use href="#ftb"/></svg><span>外部表</span></div>
          <div class="trow"><span class="gd d6"></span><span class="cv"><svg width="10" height="12"><use href="#chR"/></svg></span><svg class="ic"><use href="#prc"/></svg><span>存储过程</span></div>
          <div class="trow"><span class="gd d6"></span><span class="cv"><svg width="10" height="12"><use href="#chR"/></svg></span><svg class="ic"><use href="#seq"/></svg><span>序列</span></div>
          <div class="trow"><span class="gd d6"></span><span class="cv"><svg width="10" height="12"><use href="#chR"/></svg></span><svg class="ic"><use href="#coll"/></svg><span>排序规则</span></div>
          <div class="trow"><span class="gd d6"></span><span class="cv"><svg width="10" height="12"><use href="#chR"/></svg></span><svg class="ic"><use href="#ops"/></svg><span>操作符集</span></div>
          <div class="trow"><span class="gd d6"></span><span class="cv"><svg width="10" height="12"><use href="#chR"/></svg></span><svg class="ic"><use href="#mv"/></svg><span>物化视图</span></div>
          <div class="trow"><span class="gd d6"></span><span class="cv"><svg width="10" height="12"><use href="#chR"/></svg></span><svg class="ic"><use href="#typ"/></svg><span>类型</span></div>
          <div class="trow"><span class="gd d6"></span><span class="cv"><svg width="10" height="12"><use href="#chR"/></svg></span><svg class="ic"><use href="#agg"/></svg><span>聚合集</span></div>
          <div class="trow"><span class="gd d6"></span><span class="cv"><svg width="12" height="10"><use href="#chD"/></svg></span><svg class="ic"><use href="#tbs"/></svg><span>表 (5)</span></div>
          <div class="trow"><span class="gd d7"></span><span class="cv"><svg width="10" height="12"><use href="#chR"/></svg></span><svg class="ic"><use href="#tb"/></svg><span>jrt_printimage</span></div>
          <div class="trow"><span class="gd d7"></span><span class="cv"><svg width="10" height="12"><use href="#chR"/></svg></span><svg class="ic"><use href="#tb"/></svg><span>jrt_printpaper</span></div>
          <div class="trow"><span class="gd d7"></span><span class="cv"><svg width="10" height="12"><use href="#chR"/></svg></span><svg class="ic"><use href="#tb"/></svg><span>jrt_printtemplate</span></div>
          <div class="trow sel"><span class="gd d7"></span><span class="cv"><svg width="10" height="12"><use href="#chR"/></svg></span><svg class="ic"><use href="#tb"/></svg><span>jrt_printtemplateele</span></div>
          <div class="trow"><span class="gd d7"></span><span class="cv"><svg width="10" height="12"><use href="#chR"/></svg></span><svg class="ic"><use href="#tb"/></svg><span>jrt_task</span></div>
          <div class="trow"><span class="gd d6"></span><span class="cv"><svg width="10" height="12"><use href="#chR"/></svg></span><svg class="ic"><use href="#mv"/></svg><span>视图</span></div>
          <div class="trow"><span class="gd d6"></span><span class="cv"><svg width="10" height="12"><use href="#chR"/></svg></span><svg class="ic"><use href="#tfn"/></svg><span>触发器函数</span></div>
          <div class="trow"><span class="gd d5"></span><span class="cv"><svg width="10" height="12"><use href="#chR"/></svg></span><svg class="ic"><use href="#sch"/></svg><span>public</span></div>
          <div class="trow"><span class="gd d4"></span><span class="cv"><svg width="10" height="12"><use href="#chR"/></svg></span><svg class="ic"><use href="#cat"/></svg><span>目录</span></div>
          <div class="trow"><span class="gd d4"></span><span class="cv"><svg width="10" height="12"><use href="#chR"/></svg></span><svg class="ic"><use href="#subs"/></svg><span>订阅</span></div>
          <div class="trow"><span class="gd d4"></span><span class="cv"><svg width="10" height="12"><use href="#chR"/></svg></span><svg class="ic"><use href="#lang"/></svg><span>语言</span></div>
        </div>
        <div class="vtrack"><div class="vthumb"></div></div>
      </div>
    </aside>

    <main class="contentpane">
      <div class="toptabs d-flex">
        <div class="ptab">属性</div>
        <div class="ptab">SQL</div>
        <div class="ptab on"><svg class="ic"><use href="#dbt"/></svg>jrtbase/postgres@PostgreSQL 16*</div>
      </div>
      <div class="barzone">
        <div class="sliver"></div>
        <div class="bar1 btn-group" role="group">
          <button class="btn tbtn"><svg width="17" height="17"><use href="#conn"/></svg></button>
          <button class="btn tbtn consel"><span>jrtbase/postgres@PostgreSQL 16</span><svg width="12" height="10"><use href="#chD"/></svg></button>
          <button class="btn tbtn"><svg width="16" height="16"><use href="#dbplay"/></svg></button>
        </div>
        <div class="bar2 d-flex">
          <div class="btn-group">
            <button class="btn tbtn"><svg width="16" height="16"><use href="#fold"/></svg></button>
            <button class="btn tbtn"><svg width="16" height="16"><use href="#save"/></svg></button>
            <button class="btn tbtn nar"><svg width="12" height="10"><use href="#chD"/></svg></button>
          </div>
          <div class="btn-group"><button class="btn tbtn wid"><svg width="16" height="16"><use href="#pencil"/></svg><svg width="12" height="10"><use href="#chD"/></svg></button></div>
          <div class="btn-group">
            <button class="btn tbtn off"><svg width="16" height="16"><use href="#funnel"/></svg></button>
            <button class="btn tbtn nar off"><svg width="12" height="10" opacity=".5"><use href="#chD"/></svg></button>
          </div>
          <button class="btn limitbtn"><span>无限制</span><span class="caret2"></span></button>
          <div class="btn-group">
            <button class="btn tbtn off"><svg width="16" height="16"><use href="#stopi"/></svg></button>
            <button class="btn tbtn"><svg width="16" height="16"><use href="#playi"/></svg></button>
            <button class="btn tbtn nar"><svg width="12" height="10"><use href="#chD"/></svg></button>
          </div>
          <div class="btn-group">
            <button class="btn tbtn"><svg width="16" height="16"><use href="#ebox"/></svg></button>
            <button class="btn tbtn"><svg width="16" height="16"><use href="#cbox"/></svg></button>
            <button class="btn tbtn nar"><svg width="12" height="10"><use href="#chD"/></svg></button>
          </div>
          <div class="btn-group">
            <button class="btn tbtn off"><svg width="17" height="17"><use href="#dbchk"/></svg></button>
            <button class="btn tbtn off"><svg width="17" height="17"><use href="#dbund"/></svg></button>
          </div>
          <div class="btn-group"><button class="btn tbtn wid"><svg width="16" height="16"><use href="#listi"/></svg><svg width="12" height="10"><use href="#chD"/></svg></button></div>
          <div class="btn-group"><button class="btn tbtn solo"><svg width="16" height="16"><use href="#help"/></svg></button></div>
        </div>
      </div>
      <div class="qtabs d-flex">
        <div class="ptab on">查询</div>
        <div class="ptab later">查询历史</div>
      </div>
      <div class="codezone d-flex">
        <div class="gutter">1<br>2</div>
        <pre class="codebox"><span class="kw">SELECT</span> "RowID", "PrintTemplateDR", "PrintType", "PrintX", "PrintY", "PrintFont", "PrintFontSize", "PrintFontStyle", "PrintLength", "PrintWidth", "PrintHeight", "PrintText", "Da
    <span class="kw">FROM</span> dbo.<span class="tn">jrt_printtemplateele</span>;</pre>
      </div>
      <div class="hbar1"><div class="hthumb1"></div></div>
      <div class="rtabs d-flex">
        <div class="ptab on">数据输出</div>
        <div class="ptab later">消息</div>
        <div class="ptab later">通知</div>
      </div>
      <div class="rbar d-flex">
        <div class="btn-group">
          <button class="btn tbtn"><svg width="16" height="16"><use href="#addrow"/></svg></button>
          <button class="btn tbtn off"><svg width="16" height="17"><use href="#copyi"/></svg></button>
          <button class="btn tbtn nar"><svg width="12" height="10"><use href="#chD"/></svg></button>
          <button class="btn tbtn"><svg width="16" height="17"><use href="#paste"/></svg></button>
          <button class="btn tbtn nar"><svg width="12" height="10"><use href="#chD"/></svg></button>
          <button class="btn tbtn off"><svg width="16" height="16"><use href="#trash"/></svg></button>
        </div>
        <button class="btn tbtn solo off"><svg width="16" height="17"><use href="#dbsave"/></svg></button>
        <button class="btn tbtn solo"><svg width="16" height="16"><use href="#dl"/></svg></button>
        <button class="btn tbtn solo"><svg width="16" height="16"><use href="#graph"/></svg></button>
      </div>
      <div class="grbox">
        <table class="table dgrid">
          <colgroup>
            <col class="c0"><col class="c1"><col class="c2"><col class="c3"><col class="c4"><col class="c5"><col class="c6"><col class="c7"><col class="c8"><col class="c9"><col class="c10"><col class="c11"><col>
          </colgroup>
          <thead><tr>
            <th></th>
            <th>RowID<small>[PK] integer</small><svg class="pen"><use href="#pencil"/></svg></th>
            <th>PrintTemplateDR<small>integer</small><svg class="pen"><use href="#pencil"/></svg></th>
            <th>PrintType<small>character varying (20)</small><svg class="pen"><use href="#pencil"/></svg></th>
            <th>PrintX<small>integer</small><svg class="pen"><use href="#pencil"/></svg></th>
            <th>PrintY<small>integer</small><svg class="pen"><use href="#pencil"/></svg></th>
            <th>PrintFont<small>character varying (20)</small><svg class="pen"><use href="#pencil"/></svg></th>
            <th>PrintFontSize<small>character varying (10)</small><svg class="pen"><use href="#pencil"/></svg></th>
            <th>PrintFontStyle<small>character varying (20)</small><svg class="pen"><use href="#pencil"/></svg></th>
            <th>PrintLength<small>integer</small><svg class="pen"><use href="#pencil"/></svg></th>
            <th>PrintWidth<small>integer</small><svg class="pen"><use href="#pencil"/></svg></th>
            <th>PrintHeight<small>integer</small><svg class="pen"><use href="#pencil"/></svg></th>
            <th>PrintText<small>character varying (5000)</small></th>
          </tr></thead>
          <tbody>
            <tr><td>1</td><td>1</td><td>1</td><td>ILineN</td><td>36</td><td>505</td><td></td><td></td><td></td><td>10</td><td>760</td><td>2</td><td></td></tr>
            <tr><td>2</td><td>2</td><td>1</td><td>ILineN</td><td>32</td><td>137</td><td></td><td></td><td></td><td>10</td><td>760</td><td>2</td><td></td></tr>
            <tr><td>3</td><td>3</td><td>1</td><td>ILineN</td><td>38</td><td>70</td><td></td><td></td><td></td><td>10</td><td>760</td><td>2</td><td></td></tr>
            <tr><td>4</td><td>4</td><td>1</td><td>Graph</td><td>617</td><td>335</td><td></td><td></td><td></td><td>10</td><td>156</td><td>156</td><td></td></tr>
            <tr><td>5</td><td>5</td><td>1</td><td>Label</td><td>270</td><td>22</td><td>宋体</td><td>20</td><td>Bold</td><td>0</td><td>271</td><td>35</td><td>JRT打印报告单</td></tr>
            <tr><td>6</td><td>6</td><td>1</td><td>Data</td><td>492</td><td>78</td><td>宋体</td><td>10</td><td>Regular</td><td>40</td><td>32</td><td>20</td><td>标本</td></tr>
            <tr><td>7</td><td>7</td><td>1</td><td>Label</td><td>243</td><td>98</td><td>宋体</td><td>10</td><td>Regular</td><td>40</td><td>70</td><td>20</td><td>标本号:</td></tr>
            <tr><td>8</td><td>8</td><td>1</td><td>Data</td><td>716</td><td>113</td><td>宋体</td><td>10</td><td>Regular</td><td>40</td><td>85</td><td>20</td><td>采集时间</td></tr>
            <tr><td>9</td><td>9</td><td>1</td><td>Label</td><td>243</td><td>118</td><td>宋体</td><td>10</td><td>Regular</td><td>40</td><td>70</td><td>20</td><td>科&nbsp;&nbsp;室:</td></tr>
            <tr><td>10</td><td>10</td><td>1</td><td>Data</td><td>493</td><td>512</td><td>宋体</td><td>10</td><td>Regular</td><td>40</td><td>85</td><td>20</td><td>审核时间</td></tr>
            <tr><td>11</td><td>11</td><td>1</td><td>Data</td><td>90</td><td>120</td><td>宋体</td><td>10</td><td>Regular</td><td>0</td><td>72</td><td>20</td><td>年龄</td></tr>
            <tr><td>12</td><td>12</td><td>1</td><td>Data</td><td>492</td><td>118</td><td>宋体</td><td>10</td><td>Regular</td><td>40</td><td>37</td><td>14</td><td>诊断</td></tr>
            <tr><td>13</td><td>13</td><td>1</td><td>Data</td><td>313</td><td>78</td><td>宋体</td><td>10</td><td>Regular</td><td>40</td><td>46</td><td>20</td><td>登记号</td></tr>
            <tr><td>14</td><td>14</td><td>1</td><td>Data</td><td>492</td><td>98</td><td>宋体</td><td>10</td><td>Regular</td><td>40</td><td>33</td><td>20</td><td>床号</td></tr>
            <tr><td>15</td><td>15</td><td>1</td><td>Data</td><td>71</td><td>512</td><td>宋体</td><td>10</td><td>Regular</td><td>0</td><td>59</td><td>20</td><td>申请医生</td></tr>
            <tr><td>16</td><td>16</td><td>1</td><td>Data</td><td>313</td><td>98</td><td>宋体</td><td>10</td><td>Regular</td><td>40</td><td>46</td><td>20</td><td>检验号</td></tr>
            <tr><td>17</td><td>17</td><td>1</td><td>Data</td><td>40</td><td>481</td><td>宋体</td><td>10</td><td>Regular</td><td>40</td><td>85</td><td>20</td><td>医嘱备注</td></tr>
            <tr><td>18</td><td>18</td><td>1</td><td>Label</td><td>243</td><td>78</td><td>宋体</td><td>10</td><td>Regular</td><td>40</td><td>60</td><td>20</td><td>ID&nbsp;&nbsp;号:</td></tr>
            <tr><td>19</td><td>19</td><td>1</td><td>Label</td><td>442</td><td>98</td><td>宋体</td><td>10</td><td>Regular</td><td>40</td><td>33</td><td>20</td><td>床号:</td></tr>
          </tbody>
        </table>
      </div>
      <div class="hbar2"><div class="hthumb2"></div></div>
      <div class="statusbar d-flex">
        <div class="seg seg1">总行数：526 / 526</div>
        <div class="seg seg2">查询完成 00:00:00.252</div>
        <div class="endseg d-flex align-items-center">行数 1&nbsp;&nbsp;列</div>
      </div>
    </main>
  </div>

  <div class="anno an1"></div>
  <div class="anno an2"></div>
  <div class="anno an3"></div>
  <div class="okmsg d-flex align-items-center">
    <svg width="16" height="14" viewBox="0 0 16 14"><path d="m2 7 4.500 4.500L14 2.500" fill="none" stroke="#2f8a45" stroke-width="1.800"/></svg>
    <span>已成功运行。查询运行时间总数: 252 毫秒。 526 行受影响。</span>
    <svg class="okclose" width="12" height="14" viewBox="0 0 12 14"><path d="M2 1l8 6-8 6" fill="none" stroke="#2f8a45" stroke-width="1.600"/></svg>
  </div>
  <div class="wmark">CSDN @小鸟鱼</div>
</div>
<script src="https://cdn.jsdelivr.net/npm/bootstrap@5.3.0/dist/js/bootstrap.bundle.min.js"></script>
</body>
</html>
